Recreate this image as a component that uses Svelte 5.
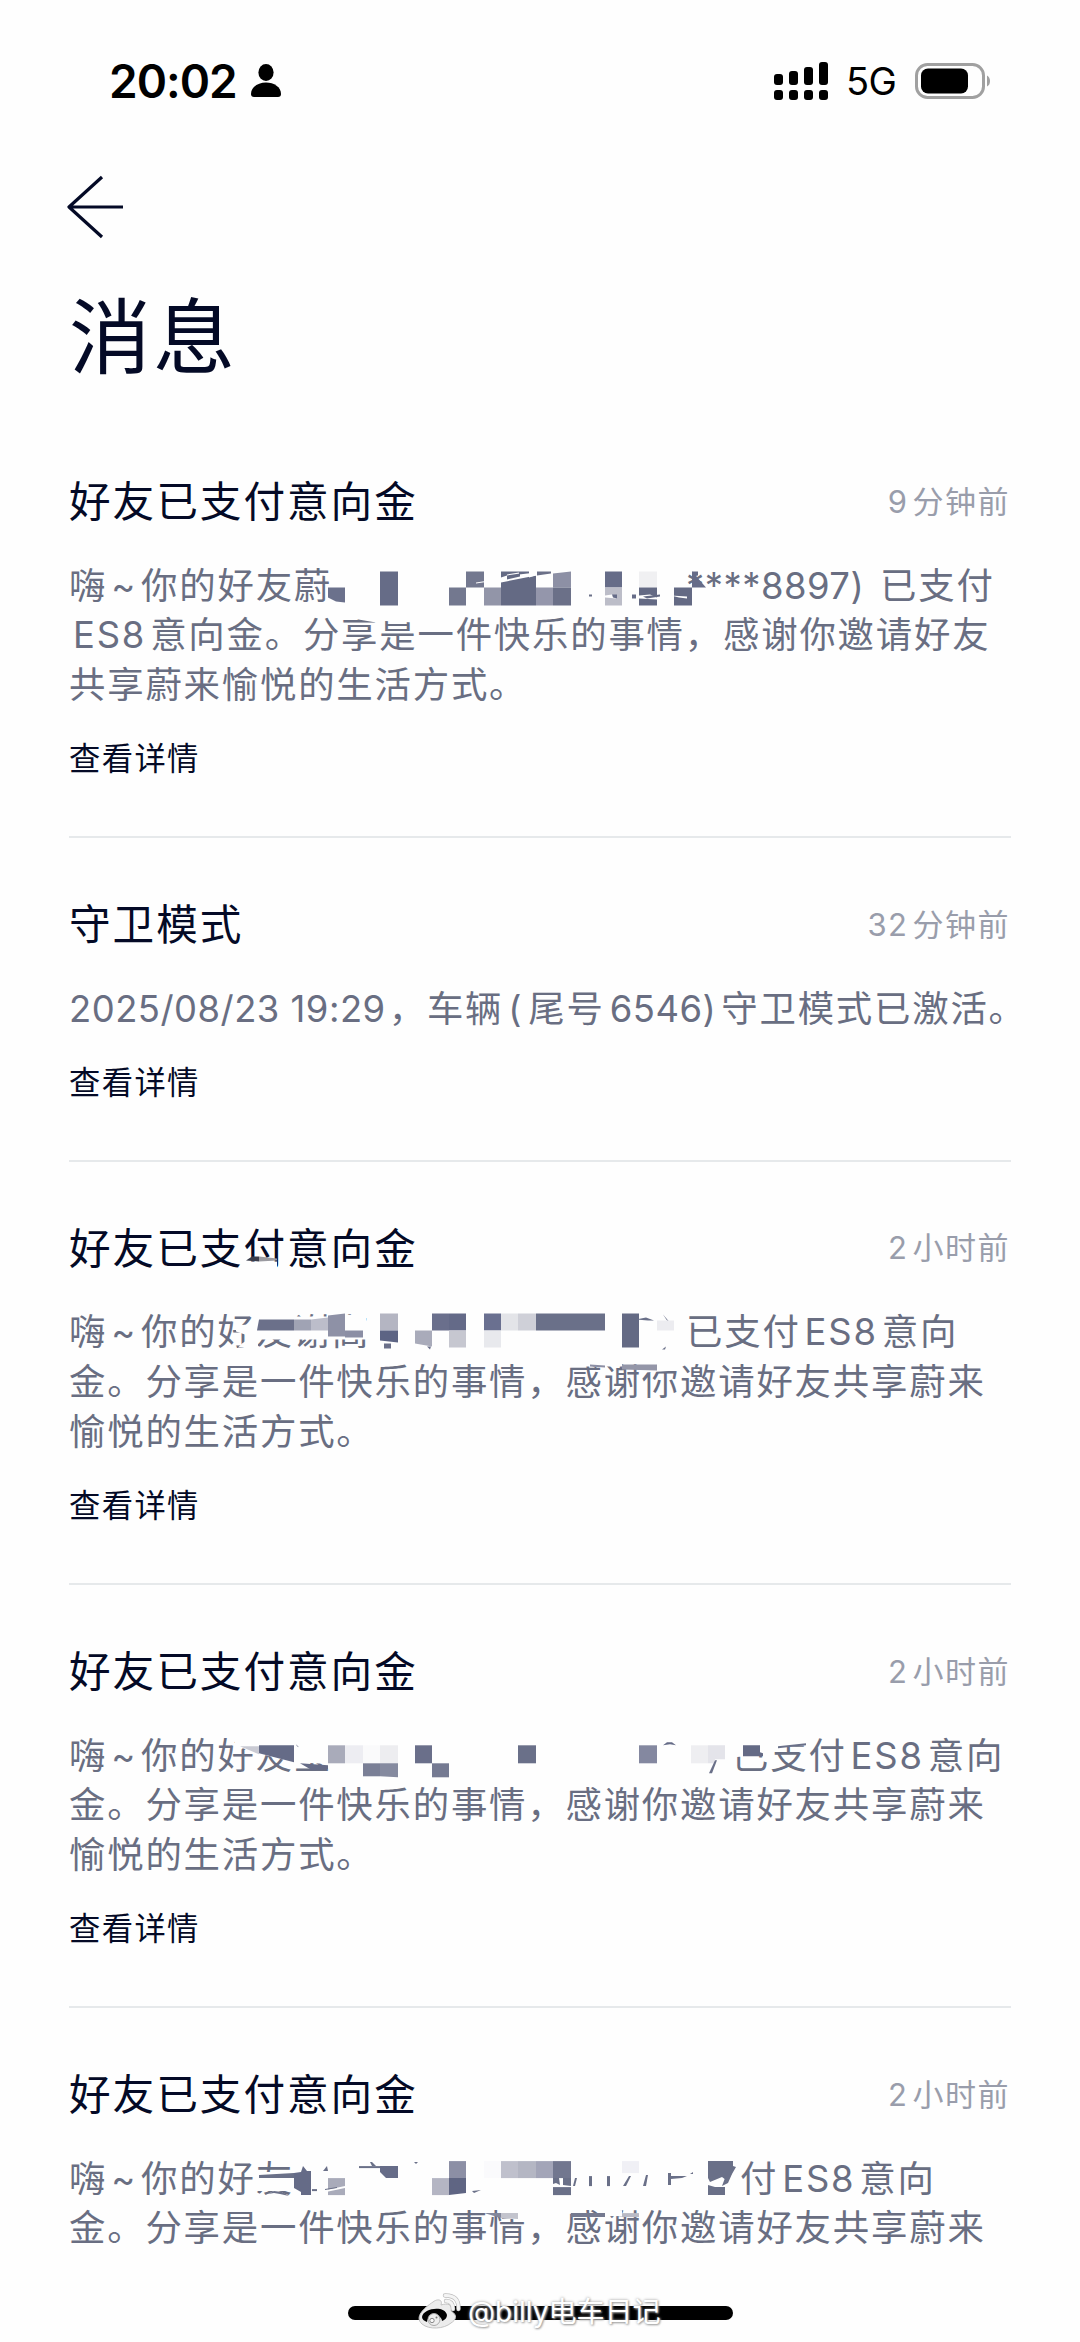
<script>
    const notices = [
        {
            title: '好友已支付意向金',
            time: '9分钟前',
            lines: [
                { lead: '嗨~你的好友蔚', width: 613, text: '****8897)', tailWidth: 198, tail: '已支付' },
                { text: 'ES8意向金。分享是一件快乐的事情，感谢你邀请好友' },
                { text: '共享蔚来愉悦的生活方式。' }
            ],
            top: 561.5,
            mosaic: [
                ['328,587 345,587 345,602 336,601 328,597', '#6b718c'],
                ['380,571 398,571 398,605 380,605', '#666c87'],
                ['466,571 484,571 484,587 466,587', '#73788f'],
                ['449,587 466,587 466,605 449,605', '#73788f'],
                ['484,587 501,587 501,605 484,605', '#9295a8'],
                ['501,571 529,571 529,577 536,575 536,605 501,605', '#646a84'],
                ['501,577 507,575 507,574 519,572 519,574 536,572 536,575 501,582', '#fefefe'],
                ['507,575 520,573 520,576 507,579', '#646a84'],
                ['476,582 502,578 502,579 476,583', '#fefefe'],
                ['536,587 553,587 553,605 536,605', '#9496ab'],
                ['537,571 551,571 551,573 537,575', '#6b7088'],
                ['553,573 571,571 571,587 553,587', '#8d90a5'],
                ['553,587 571,587 571,605 553,605', '#6b7088'],
                ['589,594 592,594 592,596 589,596', '#6b7088'],
                ['605,571 622,571 622,587 605,587', '#666c88'],
                ['605,587 622,587 622,605 605,605', '#bcbdc8'],
                ['605,595 612,594 617,598 605,597', '#fefefe'],
                ['612,594 617,594 617,598 613,597', '#666c88'],
                ['632,594 636,594 636,598 632,598', '#666c88'],
                ['639,571 657,571 657,587 639,587', '#f0f0f2'],
                ['639,587 657,587 657,605 639,605', '#646a84'],
                ['639,595 650,594 657,597 657,599 639,598', '#fefefe'],
                ['643,596 660,594 660,596 647,598', '#646a84'],
                ['674,587 692,587 692,605 674,605', '#646a84'],
                ['671,595 687,596 687,598 679,597', '#fefefe'],
                ['692,571 706,587 692,587', '#666c88'],
                ['692,571 698,571 698,575 692,576', '#666c88'],
                ['341,616 376,622 376,620 414,622 414,615 341,615', '#fefefe']
            ]
        },
        {
            title: '守卫模式',
            time: '32分钟前',
            lines: [{ text: '2025/08/23 19:29，车辆(尾号6546)守卫模式已激活。', flush: true }]
        },
        {
            title: '好友已支付意向金',
            time: '2小时前',
            lines: [
                { lead: '嗨~你的好友谢高', width: 617, text: '已支付ES8意向' },
                { text: '金。分享是一件快乐的事情，感谢你邀请好友共享蔚来' },
                { text: '愉悦的生活方式。' }
            ],
            top: 1308.5,
            mosaic: [
                ['236,1326 258,1324 258,1352 250,1352 248,1336 236,1332', '#fefefe'],
                ['242,1344 248,1340 247,1348 238,1348', '#fefefe'],
                ['257,1310 293,1310 293,1317 330,1317 366,1314 366,1340 257,1340', '#fefefe'],
                ['259,1320 294,1320 294,1331 257,1331', '#6b708a'],
                ['294,1320 311,1320 311,1331 294,1331', '#a0a3b4'],
                ['311,1320 328,1318 328,1331 311,1331', '#bcbdca'],
                ['328,1316 345,1314 345,1337 328,1337', '#8e91a6'],
                ['345,1331 363,1331 363,1338 345,1338', '#8b8ea4'],
                ['380,1314 398,1314 398,1331 380,1331', '#b4b5c2'],
                ['380,1331 398,1331 398,1343 380,1341', '#5d6484'],
                ['384,1344 391,1344 391,1349 384,1349', '#6b708a'],
                ['415,1331 432,1331 432,1347 415,1344', '#a9abba'],
                ['427,1347 431,1347 430,1350', '#6b708a'],
                ['432,1314 449,1314 449,1331 432,1331', '#6a6f8c'],
                ['449,1314 466,1314 466,1331 449,1331', '#646a88'],
                ['449,1331 466,1331 466,1348 449,1348', '#c6c7d0'],
                ['484,1314 501,1314 501,1331 484,1331', '#6a7090'],
                ['484,1331 501,1331 501,1348 484,1348', '#e8e9ed'],
                ['501,1314 518,1314 518,1331 501,1331', '#e3e4e8'],
                ['518,1314 536,1314 536,1331 518,1331', '#cfd0d8'],
                ['536,1314 605,1314 605,1331 536,1331', '#6a7089'],
                ['622,1314 639,1314 639,1348 622,1348', '#646a84'],
                ['636,1320 646,1318 654,1321 648,1321', '#6a7089'],
                ['663,1315 669,1322 667,1321', '#6a7089'],
                ['657,1321 674,1321 674,1331 657,1331', '#ececf0'],
                ['662,1350 666,1347 665,1350', '#6a7089'],
                ['245,1262 277,1262 277,1272 245,1272', '#fefefe'],
                ['246,1261 252,1257 259,1257 259,1262', '#3a3d4c'],
                ['259,1257 277,1259 277,1261 259,1262', '#9a9aa0'],
                ['575,1363 622,1363 622,1367 575,1367', '#fefefe'],
                ['590,1365 605,1366 605,1368 590,1367', '#8b8ea4'],
                ['640,1363 676,1363 676,1371 645,1373', '#fefefe'],
                ['622,1365 657,1365 657,1371 622,1370', '#9496a8']
            ]
        },
        {
            title: '好友已支付意向金',
            time: '2小时前',
            lines: [
                { lead: '嗨~你的好友宝', width: 663, text: '已支付ES8意向' },
                { text: '金。分享是一件快乐的事情，感谢你邀请好友共享蔚来' },
                { text: '愉悦的生活方式。' }
            ],
            top: 1731.7,
            mosaic: [
                ['230,1735 335,1735 335,1764 294,1762 258,1753 237,1746', '#fefefe'],
                ['240,1746 259,1746 259,1754', '#c9cad3'],
                ['259,1745 294,1745 294,1762 259,1753', '#656b87'],
                ['296,1744 299,1747 297,1746', '#656b87'],
                ['300,1763 328,1765 328,1769 312,1770', '#656b87'],
                ['328,1745 345,1745 345,1763 328,1763', '#a9abba'],
                ['345,1745 363,1745 363,1763 345,1763', '#ededf2'],
                ['363,1745 380,1745 380,1763 363,1763', '#fafafb'],
                ['380,1745 398,1745 398,1763 380,1763', '#ededf0'],
                ['363,1763 380,1763 380,1776 363,1776', '#7a7f96'],
                ['380,1763 398,1763 398,1777 380,1776', '#858a9f'],
                ['415,1745 432,1745 432,1763 415,1763', '#6a6f8a'],
                ['432,1763 449,1763 449,1777 432,1777', '#757a92'],
                ['518,1745 536,1745 536,1763 518,1763', '#6a7089'],
                ['639,1745 657,1745 657,1763 639,1763', '#8488a0'],
                ['663,1745 667,1742 672,1742 676,1745 670,1744', '#656b87'],
                ['691,1745 708,1745 708,1763 691,1763', '#eeeef1'],
                ['708,1745 725,1745 725,1759 715,1759 714,1763 708,1763', '#e4e4ea'],
                ['709,1773 715,1760 717,1760 712,1773', '#6a7089'],
                ['734,1735 768,1735 768,1754 734,1757', '#fefefe'],
                ['743,1745 760,1745 760,1752 763,1753 763,1756 743,1756', '#646a85'],
                ['770,1735 793,1735 793,1743 806,1743 806,1745 780,1747 776,1750 770,1750', '#fefefe'],
                ['778,1746 806,1743 806,1745 778,1748', '#6a7089']
            ]
        },
        {
            title: '好友已支付意向金',
            time: '2小时前',
            lines: [
                { lead: '嗨~你的好友', width: 594, text: '付ES8意向', indent: true },
                { text: '金。分享是一件快乐的事情，感谢你邀请好友共享蔚来' }
            ],
            top: 2154.9,
            last: true,
            mosaic: [
                ['256,2172 294,2172 294,2191 256,2191', '#fefefe'],
                ['266,2195 274,2191 282,2192 288,2198 268,2198', '#fefefe'],
                ['268,2194 274,2191 282,2192 289,2196 280,2194 274,2193', '#6a7088'],
                ['259,2175 294,2173 294,2178 259,2178', '#6a7088'],
                ['294,2173 301,2172 303,2166 307,2171 311,2171 311,2195 301,2195 301,2192 294,2188', '#656b87'],
                ['323,2171 327,2166 328,2171', '#6a7088'],
                ['312,2189 317,2189 317,2191 312,2191', '#6a7088'],
                ['328,2178 345,2178 345,2195 328,2195', '#a9abba'],
                ['326,2190 345,2186 345,2188 326,2192', '#fefefe'],
                ['325,2189 337,2187 337,2188 325,2190', '#6a7088'],
                ['359,2166 380,2166 380,2168 359,2168', '#6a7088'],
                ['370,2162 372,2162 376,2166 372,2166', '#6a7088'],
                ['380,2166 398,2166 398,2178 386,2178 380,2172', '#666c88'],
                ['414,2162 418,2162 416,2164', '#6a7088'],
                ['432,2178 449,2178 449,2195 432,2195', '#b4b5c3'],
                ['449,2161 466,2161 466,2178 449,2178', '#8c8fa5'],
                ['449,2178 466,2178 466,2193 449,2195', '#5f6583'],
                ['472,2191 481,2190 474,2193', '#6a7088'],
                ['484,2161 501,2161 501,2178 484,2178', '#fafafc'],
                ['501,2161 518,2161 518,2178 501,2178', '#bfc0cc'],
                ['518,2161 536,2161 536,2178 518,2178', '#b4b6c3'],
                ['536,2161 553,2161 553,2178 536,2178', '#a3a5b8'],
                ['553,2161 571,2161 571,2178 553,2178', '#72778f'],
                ['553,2178 559,2178 560,2185 556,2183 553,2184', '#6a7088'],
                ['563,2178 571,2178 571,2186 563,2185', '#6a7088'],
                ['553,2187 571,2187 571,2195 553,2195', '#6a7088'],
                ['573,2186 575,2178 577,2178 575,2186', '#6a7088'],
                ['589,2176 592,2176 592,2186 589,2186', '#6a7088'],
                ['607,2176 610,2176 610,2186 607,2186', '#6a7088'],
                ['622,2161 639,2161 639,2173 622,2173', '#f0f0f5'],
                ['623,2186 629,2176 631,2176 626,2186', '#6a7088'],
                ['643,2186 646,2175 648,2175 646,2186', '#6a7088'],
                ['668,2173 671,2173 671,2176 687,2176 682,2178 671,2179 671,2185 668,2185', '#6a7088'],
                ['690,2174 693,2172 693,2174', '#6a7088'],
                ['708,2161 733,2161 733,2166 736,2167 732,2174 726,2180 722,2177 710,2182 708,2178', '#6a7088'],
                ['723,2176 732,2174 728,2183 722,2186 725,2178', '#6a7088'],
                ['708,2185 715,2187 725,2187 725,2195 708,2195', '#6a7088'],
                ['500,2209 524,2209 524,2220 500,2218', '#fefefe'],
                ['484,2213 501,2213 501,2218', '#84889c'],
                ['501,2213 518,2213 518,2219 501,2218', '#c3c4cd'],
                ['571,2213 605,2213 605,2217 571,2217', '#757a90'],
                ['605,2210 622,2210 622,2216 605,2216', '#fefefe'],
                ['622,2213 639,2213 639,2217 622,2217', '#b9bac5']
            ]
        }
    ];

    // break a line into Chinese and Latin runs
    function runs(text) {
        return text.match(/[\x20-\x7e]+|[^\x20-\x7e]+/g) || [];
    }

    const isLatin = (run) => /^[\x20-\x7e]/.test(run);
    const isNumeric = (run) => /^[\d*]/.test(run);
</script>

{#snippet mixed(text)}
    {#each runs(text) as run}<span class:latin={isLatin(run)} class:numeric={isNumeric(run)} class:paren={run === '('}>{run}</span>{/each}
{/snippet}

<div class="screen">
    <header class="status-bar">
        <div class="status-left">
            <span class="clock">20:02</span>
            <svg class="person" viewBox="0 0 32 34">
                <ellipse cx="16" cy="8.5" rx="7.6" ry="8.5" />
                <path d="M1 30C1 23 8 18.5 16 18.5S31 23 31 30Q31 33 28 33H4Q1 33 1 30Z" />
            </svg>
        </div>
        <div class="status-right">
            <svg class="signal" viewBox="0 0 55 38">
                <rect x="0" y="12" width="9" height="11" rx="3" />
                <rect x="15" y="9" width="9" height="14" rx="3" />
                <rect x="30" y="5" width="9" height="18" rx="3" />
                <rect x="45" y="0" width="9" height="23" rx="3" />
                <rect x="0" y="28" width="9" height="10" rx="3" />
                <rect x="15" y="28" width="9" height="10" rx="3" />
                <rect x="30" y="28" width="9" height="10" rx="3" />
                <rect x="45" y="28" width="9" height="10" rx="3" />
            </svg>
            <span class="network">5G</span>
            <svg class="battery" viewBox="0 0 78 36">
                <rect x="1.5" y="1.5" width="67" height="33" rx="11" fill="none" stroke="#a0a0a0" stroke-width="3" />
                <rect x="6" y="5.5" width="47" height="25" rx="7" />
                <path d="M72 12.5Q75 14 75 18T72 23.5Z" fill="#a0a0a0" />
            </svg>
        </div>
    </header>

    <nav>
        <svg class="back" viewBox="0 0 58 64">
            <path d="M35 2L2 32L35 62M2 32H56" fill="none" stroke="#040a26" stroke-width="3.2" stroke-linejoin="round" />
        </svg>
    </nav>

    <h1>消息</h1>

    <main>
        {#each notices as notice}
            <article>
                <div class="heading">
                    <h2>{notice.title}</h2>
                    <time>{@render mixed(notice.time)}</time>
                </div>
                <div class="body">
                    {#each notice.lines as line}
                        <p class:flush={line.flush}>
                            {#if line.lead}
                                <span class="lead" style="width: {line.width}px">{@render mixed(line.lead)}</span>
                            {/if}
                            {#if line.tail}
                                <span class="lead" style="width: {line.tailWidth}px">{@render mixed(line.text)}</span>
                                {@render mixed(line.tail)}
                            {:else}
                                <span class:indent={line.indent}>{@render mixed(line.text)}</span>
                            {/if}
                        </p>
                    {/each}
                    {#if notice.mosaic}
                        <svg class="mosaic" viewBox="69 {notice.top} 942 100">
                            {#each notice.mosaic as [points, fill]}
                                <polygon {points} {fill} />
                            {/each}
                        </svg>
                    {/if}
                </div>
                {#if !notice.last}
                    <span class="details">查看详情</span>
                {/if}
            </article>
        {/each}
    </main>

    <div class="home-bar"></div>
    <div class="watermark">
        <svg viewBox="0 0 44 40">
            <path d="M15 10C20 6 25 8 23 13C29 11 35 12 33 19C40 23 38 28 33 31C26 37 11 38 4 32C-4 25 6 16 15 10Z" fill="#ececec" stroke="#c4c4c4" />
            <path d="M28 9Q35 9 35 17M27 3.5Q41 3 40.5 17" fill="none" stroke="#bdbdbd" stroke-width="4.4" stroke-linecap="round" />
            <path d="M28 9Q35 9 35 17M27 3.5Q41 3 40.5 17" fill="none" stroke="#f4f4f4" stroke-width="3" stroke-linecap="round" />
            <path d="M4 25C5 16 27 13 29 23C29 26 27 28 24 29C24 22 10 21 9 30C6 29 4 27 4 25Z" fill="#000" />
            <circle cx="16" cy="27.5" r="6" fill="#eee" stroke="#aaa" />
            <circle cx="14" cy="28.5" r="2.2" fill="#f8f8f8" stroke="#888" />
            <circle cx="18.5" cy="25.5" r="1" fill="#777" />
        </svg>
        <span>@billy电车日记</span>
    </div>
</div>

<style>
    :global(body) {
        margin: 0;
        background: #fefefe;
    }

    .screen {
        position: relative;
        width: 1080px;
        height: 2342px;
        overflow: hidden;
        background: #fefefe;
        color: #040a26;
        font-family: Inter, "Noto Sans CJK SC", sans-serif;
        text-autospace: no-autospace;
    }

    .status-bar {
        display: flex;
        justify-content: space-between;
        box-sizing: border-box;
        height: 160px;
        padding: 50px 87px 0 109px;
        color: #000;
    }

    .status-left,
    .status-right {
        display: flex;
        align-items: center;
        height: 62px;
    }

    .clock {
        width: 141px;
        font-size: 46px;
        font-weight: 600;
        letter-spacing: -1px;
    }

    .person {
        width: 32px;
        height: 34px;
    }

    .signal {
        width: 55px;
        height: 38px;
        margin-right: 17px;
    }

    .network {
        width: 69px;
        font-size: 38px;
        letter-spacing: -0.5px;
    }

    .battery {
        width: 78px;
        height: 36px;
    }

    nav {
        height: 115px;
        padding: 15px 0 0 67px;
    }

    .back {
        display: block;
        width: 58px;
        height: 64px;
    }

    h1 {
        height: 90px;
        margin: 0 0 0 69px;
        font-size: 82px;
        font-weight: 400;
        line-height: 96px;
        letter-spacing: 2px;
    }

    main {
        padding: 35px 69px 0 69px;
    }

    article {
        box-sizing: border-box;
        padding: 54px 0 47.4px;
        border-bottom: 2px solid #e6e9eb;
    }

    article:last-child {
        border: 0;
    }

    .heading {
        display: flex;
        align-items: center;
        justify-content: space-between;
        height: 60px;
        margin-bottom: 32.5px;
    }

    h2 {
        margin: 0;
        font-size: 41.6px;
        font-weight: 400;
        letter-spacing: 2px;
    }

    time {
        margin-right: 1px;
        color: #999dab;
        font-size: 31px;
        letter-spacing: 1.5px;
    }

    .body {
        position: relative;
        margin-bottom: 18.2px;
        color: #696e82;
        font-size: 36.4px;
        letter-spacing: 1.8px;
    }

    p {
        display: flex;
        height: 49.7px;
        margin: 0;
        line-height: 49.7px;
        white-space: pre;
    }

    .lead {
        flex: none;
    }

    .indent {
        margin-left: 77px;
    }

    .latin {
        margin: 0 4px;
    }

    .body .numeric {
        letter-spacing: 0.5px;
    }

    .body .paren {
        margin-right: 0;
    }

    .flush .latin {
        margin: 0 5px;
    }

    .flush .latin:first-child {
        margin: 0 3px 0 0;
    }

    .mosaic {
        position: absolute;
        top: 0;
        left: 0;
        width: 942px;
        height: 100px;
        overflow: visible;
    }

    .details {
        display: block;
        height: 60px;
        font-size: 31.3px;
        line-height: 61px;
        letter-spacing: 1.4px;
    }

    .home-bar {
        position: absolute;
        top: 2306px;
        left: 348px;
        width: 385px;
        height: 14px;
        border-radius: 7px;
        background: #000;
    }

    .watermark {
        position: absolute;
        top: 2292px;
        left: 418px;
        display: flex;
        align-items: center;
        height: 40px;
        color: #fff;
        font-size: 28px;
        text-shadow: 0 0 3px #999, 1px 1px 2px #aaa;
    }

    .watermark svg {
        width: 44px;
        height: 40px;
        margin-right: 6px;
    }

    .watermark span {
        line-height: 36px;
    }
</style>
